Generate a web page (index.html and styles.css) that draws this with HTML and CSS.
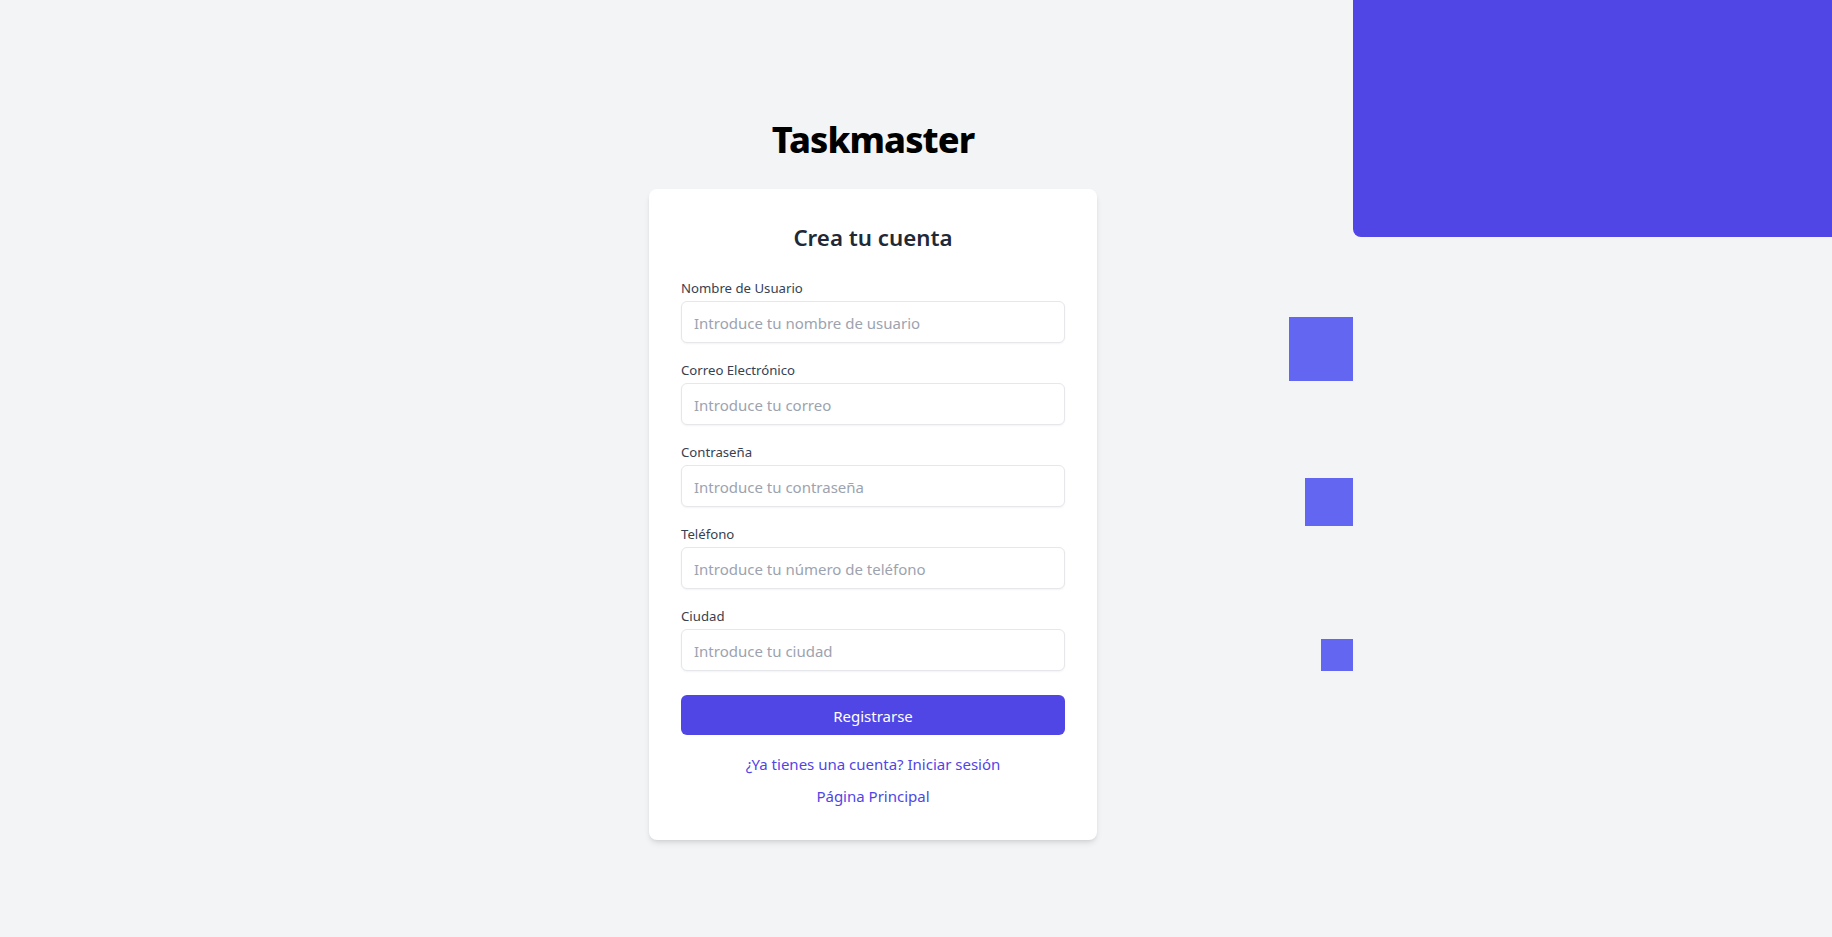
FILE: index.html
```html
<!DOCTYPE html>
<html lang="es">
<head>
<meta charset="utf-8">
<title>Taskmaster - Registro</title>
<link rel="stylesheet" href="styles.css">
</head>
<body>
<div class="decor">
  <div class="decor-block"></div>
  <div class="decor-square sq-lg"></div>
  <div class="decor-square sq-md"></div>
  <div class="decor-square sq-sm"></div>
</div>
<main class="page">
  <h1 class="brand">Taskmaster</h1>
  <div class="card">
    <h2 class="card-title">Crea tu cuenta</h2>
    <form class="form">
      <div class="field">
        <label class="label" for="u">Nombre de Usuario</label>
        <input class="input" id="u" type="text" placeholder="Introduce tu nombre de usuario">
      </div>
      <div class="field">
        <label class="label" for="e">Correo Electrónico</label>
        <input class="input" id="e" type="email" placeholder="Introduce tu correo">
      </div>
      <div class="field">
        <label class="label" for="p">Contraseña</label>
        <input class="input" id="p" type="password" placeholder="Introduce tu contraseña">
      </div>
      <div class="field">
        <label class="label" for="t">Teléfono</label>
        <input class="input" id="t" type="tel" placeholder="Introduce tu número de teléfono">
      </div>
      <div class="field">
        <label class="label" for="c">Ciudad</label>
        <input class="input" id="c" type="text" placeholder="Introduce tu ciudad">
      </div>
      <button class="btn" type="button">Registrarse</button>
    </form>
    <div class="links">
      <a class="link" href="#">¿Ya tienes una cuenta? Iniciar sesión</a>
      <a class="link" href="#">Página Principal</a>
    </div>
  </div>
</main>
</body>
</html>
```
FILE: styles.css
```css
* { box-sizing: border-box; }
html, body { margin: 0; padding: 0; }
body {
  background: #f3f4f6;
  font-family: "Segoe UI", "Noto Sans", "Open Sans", sans-serif;
  color: #111827;
  min-height: 937px;
  overflow: hidden;
  position: relative;
}
.decor { position: absolute; inset: 0; pointer-events: none; }
.decor-block {
  position: absolute;
  left: 1353px; top: 0;
  width: 479px; height: 237px;
  background: #4f46e5;
  border-bottom-left-radius: 8px;
}
.decor-square { position: absolute; background: #6366f1; }
.sq-lg { left: 1289px; top: 317px; width: 64px; height: 64px; }
.sq-md { left: 1305px; top: 478px; width: 48px; height: 48px; }
.sq-sm { left: 1321px; top: 639px; width: 32px; height: 32px; }

.page {
  display: flex;
  flex-direction: column;
  align-items: center;
  padding: 120px 86px 0 0;
  position: relative;
}
.brand {
  margin: 0 0 29px;
  font-size: 36px;
  line-height: 40px;
  font-weight: 800;
  letter-spacing: -0.9px;
  color: #000;
}
.card {
  width: 448px;
  background: #fff;
  border-radius: 8px;
  box-shadow: 0 4px 6px -1px rgba(0,0,0,0.1), 0 2px 4px -2px rgba(0,0,0,0.1);
  padding: 32px;
}
.card-title {
  margin: 0 0 24px;
  padding-top: 1px;
  text-align: center;
  font-size: 22.3px;
  line-height: 31px;
  font-weight: 600;
  color: #1f2937;
}
.form { display: flex; flex-direction: column; gap: 16px; }
.field { display: flex; flex-direction: column; }
.label {
  font-size: 13.2px;
  line-height: 18px;
  padding-top: 2px;
  color: #374151;
  margin-bottom: 4px;
}
.input {
  height: 42px;
  width: 100%;
  padding: 9px 12px 7px;
  border: 1px solid #e5e7eb;
  border-radius: 6px;
  box-shadow: 0 1px 2px 0 rgba(0,0,0,0.05);
  font-family: inherit;
  font-size: 15px;
  line-height: 24px;
  color: #111827;
  background: #fff;
  outline: none;
}
.input::placeholder { color: #9ca3af; }
.btn {
  margin-top: 8px;
  height: 40px;
  padding: 9px 16px 7px;
  border: 0;
  border-radius: 6px;
  background: #4f46e5;
  color: #fff;
  font-family: inherit;
  font-size: 15px;
  line-height: 24px;
}
.links {
  margin-top: 17px;
  display: flex;
  flex-direction: column;
  align-items: center;
  gap: 8px;
}
.link {
  font-size: 15px;
  line-height: 24px;
  color: #4f46e5;
  text-decoration: none;
}
```
